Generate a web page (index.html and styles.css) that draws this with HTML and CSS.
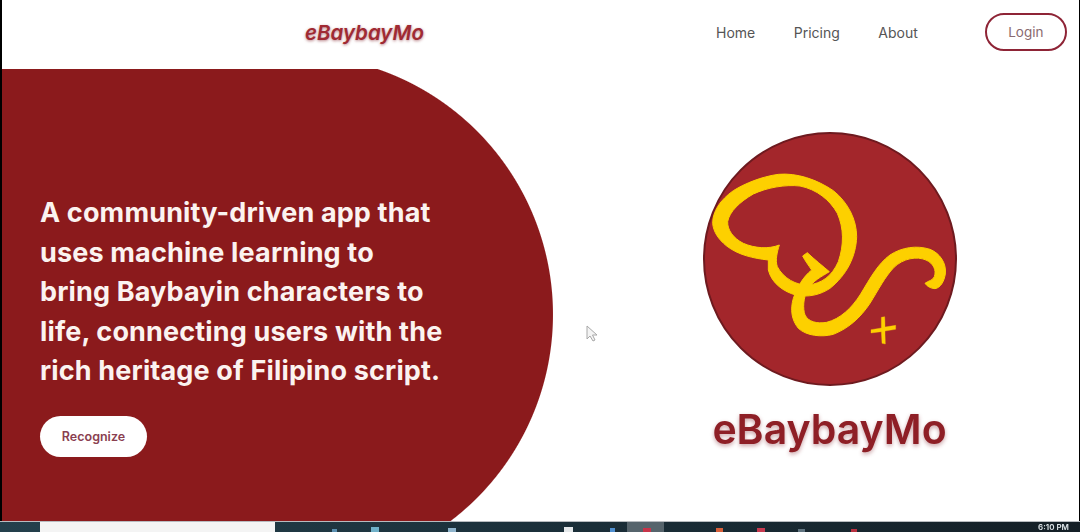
FILE: index.html
```html
<!DOCTYPE html>
<html>
<head>
    <title>eBaybayMo</title>
    <link rel="stylesheet" href="styles.css">
</head>
<body>
    <div class="page">
        <!-- top navigation -->
        <header class="topbar">
            <div class="brand">eBaybayMo</div>
            <nav class="links">
                <a href="#">Home</a>
                <a href="#">Pricing</a>
                <a href="#">About</a>
            </nav>
            <button class="login">Login</button>
        </header>

        <main class="hero">
            <section class="panel">
                <h1 class="headline">A community-driven app that<br>uses machine learning to<br>bring Baybayin characters to<br>life, connecting users with the<br>rich heritage of Filipino script.</h1>
                <button class="recognize">Recognize</button>
            </section>
            <section class="showcase">
                <svg class="logo" viewBox="0 0 840 840" width="280" height="280">
                    <circle cx="420" cy="417" r="378" fill="#a3262b" stroke="#6e1a1f" stroke-width="6"/>
                    <g fill="#fdd000" stroke="#fdd000" stroke-width="3" stroke-linejoin="round" fill-rule="evenodd">
                        <!-- heart shaped brush stroke -->
                        <path d="M68 310 C68 275 90 240 130 212 C165 190 215 170 265 163 C320 158 380 178 430 212 C475 248 500 300 500 350 C498 410 470 465 420 505 C390 525 355 532 320 526 C280 515 245 490 235 450 L235 420 C190 415 145 405 110 378 C85 358 70 335 68 310 Z M268 375 C235 388 195 385 160 370 C130 355 112 330 113 305 C118 275 150 245 190 222 C230 203 285 193 330 198 C380 208 420 240 442 280 C462 325 462 375 445 425 C425 470 395 490 355 495 C320 497 280 475 262 440 C255 420 262 395 268 375 Z"/>
                        <!-- arrow head running into the long tail -->
                        <path d="M338 408 L352 398 C375 420 398 438 418 455 C395 470 370 480 352 510 C340 535 338 565 345 585 C355 605 380 612 410 607 C450 597 485 565 512 522 C540 475 565 430 600 405 C635 382 680 375 720 388 C750 400 770 430 766 462 C762 485 752 503 735 506 C722 505 712 500 705 490 C715 482 728 482 733 470 C740 450 730 430 708 420 C680 408 640 415 612 442 C585 470 565 510 540 550 C510 595 475 625 430 643 C395 652 350 648 325 625 C305 600 300 570 310 535 C322 500 340 470 365 450 C355 435 345 422 338 408 Z"/>
                        <!-- small plus mark -->
                        <path stroke-width="1" d="M574 592 L584 590 C585 605 585 612 585 621 L617 616 L617 628 L585 633 C585 650 586 660 586 672 L576 670 L574 635 L543 639 L543 629 L574 624 Z"/>
                    </g>
                </svg>
                <div class="wordmark">eBaybayMo</div>
            </section>
        </main>

        <!-- mouse pointer caught in the recording -->
        <svg class="pointer" viewBox="0 0 12 18" width="12" height="18">
            <path d="M1 1 L1 14 L4 11 L7 16 L9 15 L6.500 10 L11 10 Z" fill="#f4f4f4" stroke="#a8a8a8"/>
        </svg>

        <footer class="taskbar">
            <svg class="tray" viewBox="0 0 1030 10" width="1030" height="10">
                <rect x="40" y="0" width="235" height="10" fill="#f4f4f4"/>
                <rect x="627" y="0" width="37" height="10" fill="#56646c"/>
                <rect x="332" y="7" width="5" height="3" fill="#5a8fb0"/>
                <rect x="371" y="5" width="8" height="5" fill="#6fb0c8"/>
                <rect x="448" y="6" width="8" height="4" fill="#8fb4cc"/>
                <rect x="564" y="5" width="9" height="5" fill="#e4e8ea"/>
                <rect x="610" y="6" width="5" height="4" fill="#4f8fd0"/>
                <rect x="643" y="6" width="8" height="4" fill="#c8344a"/>
                <rect x="716" y="6" width="7" height="4" fill="#d8603a"/>
                <rect x="757" y="6" width="8" height="4" fill="#c83a50"/>
                <rect x="798" y="7" width="7" height="3" fill="#607480"/>
                <rect x="851" y="7" width="6" height="3" fill="#b83040"/>
            </svg>
            <span class="clock">6:10 PM</span>
        </footer>
    </div>
</body>
</html>
```

FILE: styles.css
```css
html, body{
    margin:0;
    height:100%;
    background-color:#000;
    overflow:hidden;
}
.page{
    position:relative;
    display:flex;
    flex-direction:column;
    width:1080px;
    height:532px;
    font-family:"Inter", "Open Sans", sans-serif;
    filter:blur(0.4px);
}
.topbar{
    display:flex;
    align-items:center;
    height:69px;
    margin:0 1px 0 2px;
    padding:0 0 5px 303px;
    box-sizing:border-box;
    background-color:#fff;
}
.brand{
    width:411px;
    font-size:20.500px;
    font-weight:600;
    font-style:italic;
    color:#a02a33;
    text-shadow:0 1px 3px rgba(120,20,30,0.55);
}
.links{
    display:flex;
    gap:38.500px;
}
.links a{
    font-size:14px;
    font-weight:400;
    color:#555;
    text-decoration:none;
}
.login{
    width:82px;
    height:38px;
    margin-left:67px;
    padding:0;
    background-color:#fff;
    border:2px solid #8e2436;
    border-radius:19px;
    font-family:inherit;
    font-size:13.500px;
    color:#8a6a70;
}
.hero{
    display:flex;
    flex:1;
    margin:0 1px 0 2px;
    background-color:#fff;
    min-height:0;
}
.panel{
    width:552px;
    box-sizing:border-box;
    padding:124px 0 0 38px;
    background:
        radial-gradient(circle 260px at 291.500px 245.500px, #8b1a1c 99.6%, transparent 100%),
        linear-gradient(#8b1a1c, #8b1a1c) left top / 292px 100% no-repeat;
}
.headline{
    margin:0;
    font-size:27px;
    line-height:39.500px;
    font-weight:700;
    letter-spacing:0.15px;
    color:#fbf3f0;
    white-space:nowrap;
}
.recognize{
    display:block;
    width:107px;
    height:41px;
    margin-top:25px;
    padding:0;
    background-color:#fff;
    border:none;
    border-radius:21px;
    font-family:inherit;
    font-size:12.500px;
    font-weight:600;
    color:#8a4050;
}
.showcase{
    flex:1;
    display:flex;
    flex-direction:column;
    align-items:center;
    padding:51px 0 0 26px;
}
.logo{
    display:block;
}
.wordmark{
    margin-top:4px;
    font-size:41px;
    font-weight:600;
    color:#8e1f26;
    text-shadow:0 2px 4px rgba(120,20,30,0.4);
}
.pointer{
    position:absolute;
    left:586px;
    top:325px;
}
.taskbar{
    display:flex;
    justify-content:space-between;
    height:10px;
    overflow:hidden;
    background:linear-gradient(90deg, #24404c, #1a2e38 55%, #141f26);
    box-shadow:0 -1px 0 #b8bcc0;
}
.tray{
    display:block;
}
.clock{
    margin-right:11px;
    font-size:8px;
    line-height:10px;
    font-weight:600;
    color:#dfe6ea;
    white-space:nowrap;
}
```
